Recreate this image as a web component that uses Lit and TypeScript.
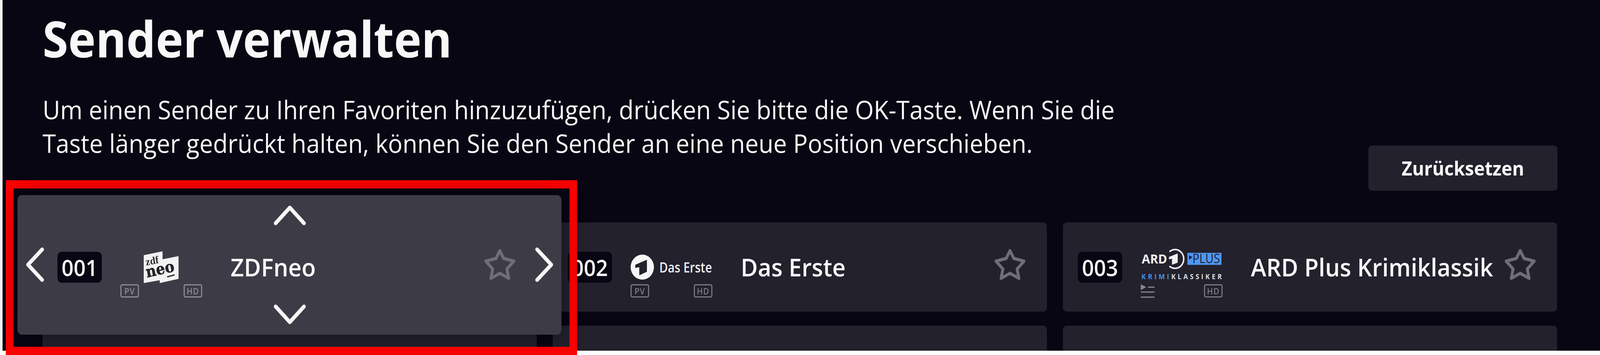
import { LitElement, html, css, svg } from "lit";
import { customElement } from "lit/decorators.js";

const star = html`<svg class="star" viewBox="0 0 85 81" aria-hidden="true"><path d="M42.5 5 L53 25 L81 32 L62 52 L67 76 L42.5 63 L18 76 L23 52 L4 32 L32 25 Z" /></svg>`;

const tag = (t: string) => html`<span class="tag">${t}</span>`;

const listIcon = html`<svg class="list" viewBox="0 0 38 35" aria-hidden="true">
  <path d="M0 0 L15 7.5 L0 15 Z" class="fill" />
  <path d="M20 7.5 H38 M0 20 H38 M0 33 H38" class="line" />
</svg>`;

const zdfLogo = svg`
  <polygon points="64.3,9.7 116,-0.3 116,20.3 160,12 160,70.3 108.3,81 108.3,73.7 64.3,81" fill="#f2f2f2" />
  <text x="71" y="36" transform="rotate(-10 71 36)" font-family="Liberation Serif, serif" font-weight="700" font-size="27" fill="#2b2a30" textLength="36" lengthAdjust="spacingAndGlyphs">zdf</text>
  <text x="73" y="67" transform="rotate(-12 73 67)" font-family="DejaVu Serif, serif" font-weight="700" font-size="40" fill="#232227" stroke="#232227" stroke-width="0.8" textLength="79" lengthAdjust="spacingAndGlyphs">neo</text>
  <path d="M128.7 65.3 L149.3 60" stroke="#232227" stroke-width="3" />
`;

const ersteLogo = svg`
  <circle cx="32.3" cy="40.3" r="32" fill="#f6f6f6" />
  <polygon points="45,21.3 45,52 24,61.3 24,40.3 13,42.6 13,34.3" fill="#22212c" />
  <text x="79" y="54.3" font-family="Open Sans, sans-serif" font-weight="600" font-size="36" fill="#efefef" textLength="145" lengthAdjust="spacingAndGlyphs">Das Erste</text>
`;

const ardLogo = svg`
  <text x="2.7" y="31.3" font-family="Open Sans, sans-serif" font-weight="700" font-size="33" fill="#f0f0f0" textLength="70" lengthAdjust="spacingAndGlyphs">ARD</text>
  <path d="M78.9 0.9 A24 24 0 1 1 78.9 37.7" fill="none" stroke="#f0f0f0" stroke-width="4" />
  <polygon points="101.7,5.3 101.7,28.7 86,34.3 86,18.7 77.7,20.3 77.7,14.3" fill="#f0f0f0" />
  <rect x="128.3" y="3.7" width="93.7" height="30.7" fill="#4f97f5" />
  <polygon points="132.7,10.3 142.7,14.7 132.7,21.3" fill="#22212c" />
  <text x="142" y="30.3" font-family="Open Sans, sans-serif" font-weight="500" font-size="32" fill="#22212c" textLength="76" lengthAdjust="spacingAndGlyphs">PLUS</text>
  <text x="2" y="71.3" font-family="Open Sans, sans-serif" font-weight="700" font-size="18" fill="#4a90e2" textLength="76" lengthAdjust="spacing">KRIMI</text>
  <text x="84" y="71.3" font-family="Open Sans, sans-serif" font-weight="700" font-size="18" fill="#dcdcdc" textLength="139" lengthAdjust="spacing">KLASSIKER</text>
`;

const row = (num: string, logo: unknown, left: unknown, name: string) => html`
  <div class="row">
    <span class="num">${num}</span>
    <div class="logo">
      <svg class="mark" viewBox="0 0 225 81" aria-hidden="true">${logo}</svg>
      <div class="tags">${left}${tag("HD")}</div>
    </div>
    <span class="name">${name}</span>
    ${star}
  </div>
`;

@customElement("app-root")
export class AppRoot extends LitElement {
  static styles = css`
    :host {
      display: block;
      height: 908px;
      overflow: hidden;
      background: #fff;
      font-family: "Open Sans", sans-serif;
      color: #f8f8f8;
    }
    .stage {
      position: relative;
      width: 4400px;
      height: 908px;
      transform-origin: left top;
    }
    .page {
      border-left: 7px solid #f5f5f5;
      height: 897px;
      box-sizing: border-box;
      padding: 23px 117px 0 110px;
      background: #070612;
      overflow: hidden;
    }
    h1 {
      margin: 0 0 63px;
      font-size: 128px;
      line-height: 150px;
      font-weight: 700;
    }
    p {
      margin: 0;
      font-size: 66.4px;
      line-height: 86px;
      font-weight: 400;
    }
    .head {
      display: flex;
      justify-content: space-between;
      align-items: flex-start;
      height: 465px;
      margin-bottom: 81px;
    }
    .btn {
      flex: none;
      align-self: flex-end;
      width: 520px;
      height: 116px;
      display: flex;
      align-items: center;
      justify-content: center;
      background: #22212c;
      border-radius: 10px;
      font-size: 50px;
      font-weight: 700;
    }
    .grid {
      display: grid;
      grid-template-columns: repeat(3, 1359px);
      grid-auto-rows: 228px;
      column-gap: 44px;
      row-gap: 36px;
    }
    .card {
      background: #22212c;
      border-radius: 10px;
    }
    .row {
      display: flex;
      align-items: center;
      height: 228px;
      width: 1359px;
      padding: 0 59px 0 41px;
      box-sizing: border-box;
    }
    .num {
      flex: none;
      width: 122px;
      height: 79px;
      display: flex;
      align-items: center;
      justify-content: center;
      background: #070612;
      border-radius: 12px;
      font-size: 58px;
      font-weight: 600;
    }
    .logo {
      flex: none;
      width: 225px;
      margin: 74px 78px 0 51px;
      height: 154px;
      display: flex;
      flex-direction: column;
      align-self: flex-start;
      gap: 3px;
    }
    .mark {
      display: block;
      width: 225px;
      height: 81px;
      overflow: visible;
    }
    .tags {
      display: flex;
      justify-content: space-between;
      align-items: flex-start;
    }
    .tag {
      width: 51px;
      height: 34px;
      box-sizing: border-box;
      display: flex;
      align-items: center;
      justify-content: center;
      border: 3px solid #7b7a83;
      border-radius: 5px;
      color: #7b7a83;
      font-size: 22px;
      font-weight: 600;
      letter-spacing: 1px;
    }
    .list {
      width: 38px;
      height: 35px;
    }
    .fill {
      fill: #8a8991;
    }
    .line {
      stroke: #8a8991;
      stroke-width: 3;
      fill: none;
    }
    .name {
      flex: 1;
      font-size: 64px;
      font-weight: 600;
      line-height: 84px;
      white-space: nowrap;
    }
    .star {
      flex: none;
      width: 85px;
      height: 81px;
      margin-bottom: 14px;
      fill: none;
      stroke: #6f6e75;
      stroke-width: 8;
      stroke-linejoin: round;
    }
    .frame {
      position: absolute;
      left: 16px;
      top: 461px;
      width: 1571px;
      height: 447px;
      box-sizing: border-box;
      border: 21px solid #ff0000;
    }
    .focus {
      position: absolute;
      left: 11px;
      top: 17px;
      width: 1496px;
      height: 357px;
      box-sizing: border-box;
      padding: 70px 0 0 69px;
      background: #3d3b46;
      border-radius: 12px;
      box-shadow: 0 0 60px rgba(0, 0, 0, 0.35);
    }
    .focus .tag {
      border-color: #8d8c94;
      color: #8d8c94;
    }
    .chev {
      position: absolute;
      fill: none;
      stroke: #f8f8f8;
      stroke-width: 10;
      stroke-linecap: round;
      stroke-linejoin: round;
    }
    .chev.up {
      left: 705px;
      top: 27px;
      width: 88px;
      height: 50px;
    }
    .chev.down {
      left: 705px;
      top: 280px;
      width: 88px;
      height: 50px;
    }
    .chev.left {
      left: 24px;
      top: 134px;
      width: 49px;
      height: 88px;
    }
    .chev.right {
      left: 1423px;
      top: 134px;
      width: 50px;
      height: 88px;
    }
  `;

  render() {
    // The browser can hand out a narrower window than the 4400px design: fit the design to it.
    const fit = Math.min(1, window.innerWidth / 4400);
    return html`
      <div class="stage" style="transform: scaleX(${fit})">
        <div class="page">
          <div class="head">
            <div>
              <h1>Sender verwalten</h1>
              <p>
                Um einen Sender zu Ihren Favoriten hinzuzufügen, drücken Sie bitte die OK-Taste. Wenn Sie die<br />
                Taste länger gedrückt halten, können Sie den Sender an eine neue Position verschieben.
              </p>
            </div>
            <div class="btn">Zurücksetzen</div>
          </div>
          <div class="grid">
            <div class="card"></div>
            <div class="card">${row("002", ersteLogo, tag("PV"), "Das Erste")}</div>
            <div class="card">${row("003", ardLogo, listIcon, "ARD Plus Krimiklassik")}</div>
            <div class="card"></div>
            <div class="card"></div>
            <div class="card"></div>
          </div>
        </div>
        <div class="frame">
          <div class="focus">
            ${row("001", zdfLogo, tag("PV"), "ZDFneo")}
            <svg class="chev up" viewBox="0 0 88 50"><path d="M5 45 L44 5 L83 45" /></svg>
            <svg class="chev down" viewBox="0 0 88 50"><path d="M5 5 L44 45 L83 5" /></svg>
            <svg class="chev left" viewBox="0 0 49 88"><path d="M44 5 L5 44 L44 83" /></svg>
            <svg class="chev right" viewBox="0 0 50 88"><path d="M6 5 L45 44 L6 83" /></svg>
          </div>
        </div>
      </div>
    `;
  }
}
